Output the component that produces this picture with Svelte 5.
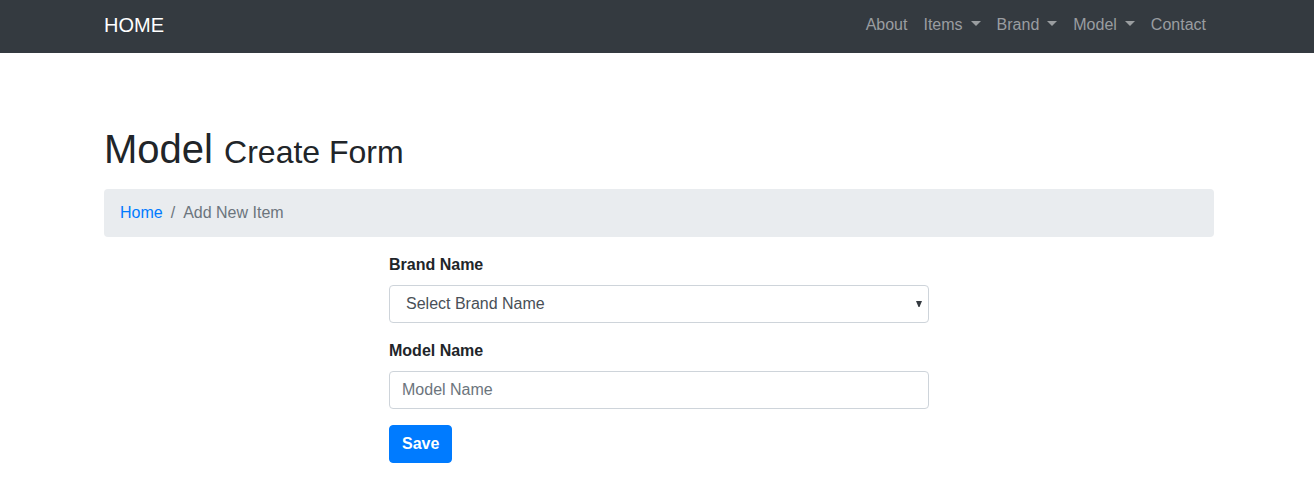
<script>
  const links = [
    { label: 'About', menu: false },
    { label: 'Items', menu: true },
    { label: 'Brand', menu: true },
    { label: 'Model', menu: true },
    { label: 'Contact', menu: false }
  ];
  let brand = $state('');
  let model = $state('');
</script>

<nav class="navbar">
  <div class="container nav-inner">
    <a class="brand" href="#home">HOME</a>
    <ul class="nav">
      {#each links as link}
        <li><a href={'#' + link.label.toLowerCase()} class:toggle={link.menu}>{link.label}</a></li>
      {/each}
    </ul>
  </div>
</nav>

<main class="container">
  <h1>Model <small>Create Form</small></h1>

  <ol class="breadcrumb">
    <li><a href="#home">Home</a></li>
    <li>Add New Item</li>
  </ol>

  <form onsubmit={(e) => e.preventDefault()}>
    <div class="group">
      <label for="brand">Brand Name</label>
      <div class="select-wrap">
        <select id="brand" class="control" bind:value={brand}>
          <option value="">Select Brand Name</option>
        </select>
        <svg class="arrow" viewBox="0 0 6 6" aria-hidden="true"><path d="M0 0H6L3.5 6H2.5Z" /></svg>
      </div>
    </div>
    <div class="group">
      <label for="model">Model Name</label>
      <input id="model" class="control" type="text" placeholder="Model Name" bind:value={model} />
    </div>
    <button type="submit">Save</button>
  </form>
</main>

<style>
  :global(body) {
    font-family: "Liberation Sans", Arial, sans-serif;
    font-size: 16px;
    line-height: 24px;
    color: #212529;
    background: #fff;
  }
  .container {
    box-sizing: border-box;
    width: 100%;
    max-width: 1140px;
    margin: 0 auto;
    padding: 0 13px 0 17px;
  }
  a { text-decoration: none; }
  .navbar {
    background: #343a40;
    padding: 5px 0 8px;
  }
  .nav-inner {
    display: flex;
    align-items: center;
    justify-content: space-between;
  }
  .brand {
    color: #fff;
    font-size: 20px;
    line-height: 30px;
  }
  .nav, .breadcrumb {
    display: flex;
    list-style: none;
    margin: 0;
    padding: 0;
  }
  .nav a {
    display: block;
    padding: 8px;
    color: #9a9da0;
  }
  .toggle::after {
    content: "";
    display: inline-block;
    margin-left: 8px;
    vertical-align: 4px;
    border-top: 5px solid;
    border-right: 5px solid transparent;
    border-left: 5px solid transparent;
  }
  h1 {
    margin: 72px 0 16px;
    font-size: 40px;
    line-height: 48px;
    font-weight: 400;
  }
  small {
    font-size: 32px;
    line-height: 32px;
  }
  .breadcrumb {
    padding: 12px 16px;
    margin-bottom: 16px;
    border-radius: 4px;
    background: #e9ecef;
    color: #6c757d;
  }
  .breadcrumb a { color: #007bff; }
  .breadcrumb li + li::before {
    content: "/";
    padding: 0 8px;
  }
  form {
    max-width: 540px;
    margin: 0 auto;
  }
  .group { margin-bottom: 16px; }
  label {
    display: block;
    margin-bottom: 8px;
    font-weight: 700;
  }
  .control {
    display: block;
    box-sizing: border-box;
    width: 100%;
    height: 38px;
    padding: 6px 12px;
    border: 1px solid #ced4da;
    border-radius: 4px;
    background: #fff;
    color: #495057;
    font: inherit;
  }
  .control::placeholder { color: #6c757d; opacity: 1; }
  select.control {
    appearance: none;
    padding: 6px 16px;
  }
  .select-wrap { position: relative; }
  .arrow {
    position: absolute;
    right: 7px;
    top: 16px;
    width: 6px;
    height: 6px;
    fill: #343a40;
    pointer-events: none;
  }
  button {
    display: block;
    padding: 6px 12px;
    border: 1px solid #007bff;
    border-radius: 4px;
    background: #007bff;
    color: #fff;
    font: inherit;
    font-weight: 700;
  }
</style>
